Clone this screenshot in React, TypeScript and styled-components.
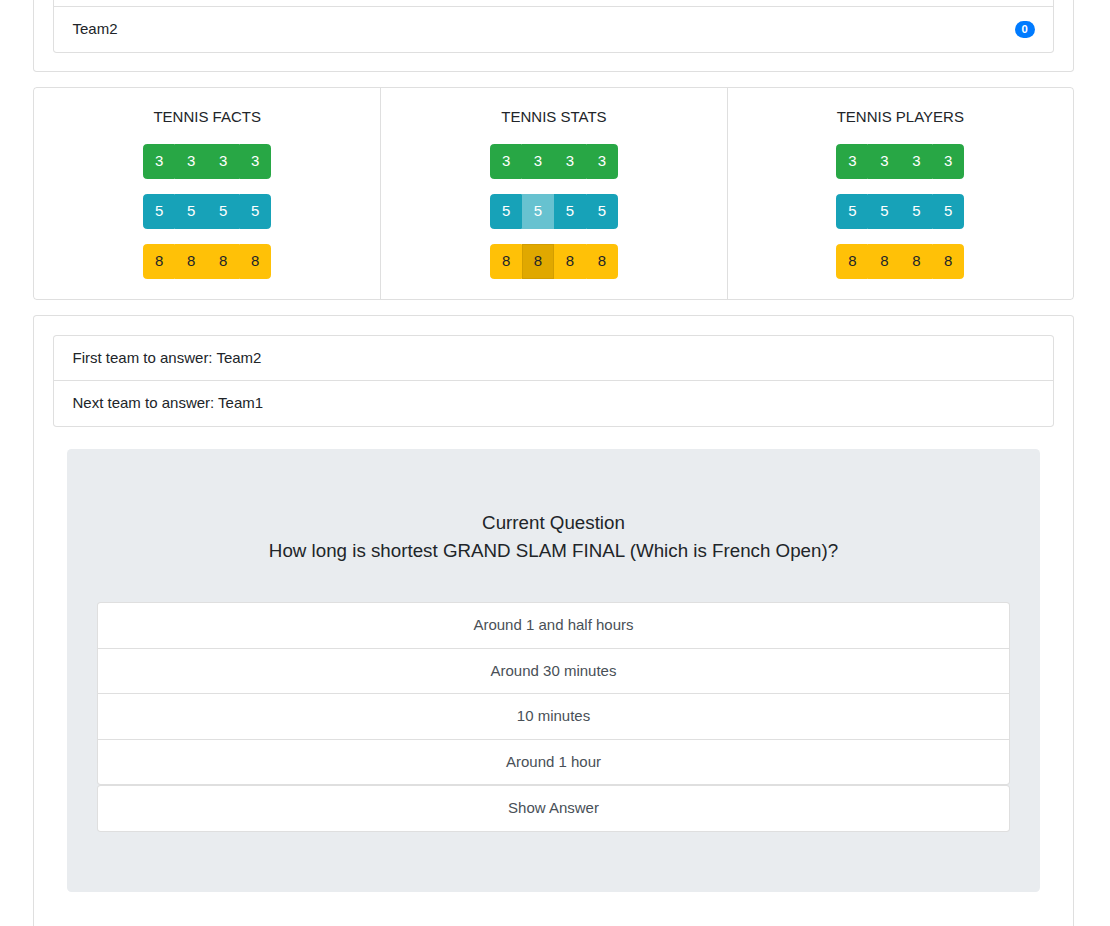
import styled, { createGlobalStyle, css } from "styled-components";

const GlobalStyle = createGlobalStyle`
  html, body {
    margin: 0;
    padding: 0;
    background: #fff;
  }
  body {
    font-family: "Liberation Sans", Arial, Helvetica, sans-serif;
    font-size: 15px;
    line-height: 1.5;
    color: #212529;
  }
  * {
    box-sizing: border-box;
  }
`;

const Page = styled.div`
  padding: 0 36px 0 33px;
  margin-top: -59px;
`;

const Card = styled.div`
  background: #fff;
  border: 1px solid rgba(0, 0, 0, 0.125);
  border-radius: 3.75px;
  margin-bottom: 15px;
`;

const CardBody = styled.div`
  padding: 18.75px 18.75px 18px;
`;

const ListGroup = styled.div`
  display: flex;
  flex-direction: column;
  border-radius: 3.75px;
`;

const ListItem = styled.div<{ $action?: boolean; $center?: boolean }>`
  display: flex;
  justify-content: ${(p) => (p.$center ? "center" : "space-between")};
  align-items: center;
  padding: 11px 18.75px;
  line-height: 22.5px;
  background: #fff;
  border: 1px solid rgba(0, 0, 0, 0.125);
  color: ${(p) => (p.$action ? "#495057" : "#212529")};
  cursor: ${(p) => (p.$action ? "pointer" : "default")};

  & + & {
    border-top-width: 0;
  }
  &:first-child {
    border-top-left-radius: 3.75px;
    border-top-right-radius: 3.75px;
  }
  &:last-child {
    border-bottom-left-radius: 3.75px;
    border-bottom-right-radius: 3.75px;
  }
`;

const Badge = styled.span`
  display: inline-block;
  background: #007bff;
  color: #fff;
  font-size: 11.25px;
  font-weight: 700;
  line-height: 1;
  padding: 2.8px 6.75px;
  border-radius: 10rem;
`;

const CardGroup = styled.div`
  display: grid;
  grid-template-columns: repeat(3, 1fr);
  border: 1px solid rgba(0, 0, 0, 0.125);
  border-radius: 3.75px;
  margin-bottom: 15px;
`;

const Category = styled.div`
  display: flex;
  flex-direction: column;
  align-items: center;
  gap: 15px;
  padding: 18.5px 18.75px 20px;
  & + & {
    border-left: 1px solid rgba(0, 0, 0, 0.125);
  }
`;

const CategoryTitle = styled.div`
  text-align: center;
  text-transform: uppercase;
  line-height: 22.5px;
`;

const palette = {
  success: { bg: "#28a745", fg: "#fff", activeBg: "#218838", activeBorder: "#1e7e34" },
  info: { bg: "#17a2b8", fg: "#fff", activeBg: "#138496", activeBorder: "#117a8b" },
  warning: { bg: "#ffc107", fg: "#212529", activeBg: "#e0a800", activeBorder: "#d39e00" },
};

type Variant = keyof typeof palette;

const BtnGroup = styled.div`
  display: inline-flex;
`;

const PointBtn = styled.button<{ $variant: Variant; $state?: "used" | "active" }>`
  font-family: inherit;
  font-size: 15px;
  line-height: 22px;
  padding: 5.5px 10.8px;
  margin: 0;
  border: 1px solid ${(p) => palette[p.$variant].bg};
  background: ${(p) => palette[p.$variant].bg};
  color: ${(p) => palette[p.$variant].fg};
  cursor: pointer;
  border-radius: 0;

  &:first-child {
    border-top-left-radius: 3.75px;
    border-bottom-left-radius: 3.75px;
  }
  &:last-child {
    border-top-right-radius: 3.75px;
    border-bottom-right-radius: 3.75px;
  }

  ${(p) =>
    p.$state === "used" &&
    css`
      opacity: 0.65;
    `}
  ${(p) =>
    p.$state === "active" &&
    css`
      background: ${palette[p.$variant].activeBg};
      border-color: ${palette[p.$variant].activeBorder};
    `}
`;

const Jumbotron = styled.div`
  background: #e9ecef;
  border-radius: 4.5px;
  margin: 22.5px 14px 30px 14px;
  padding: 60px 30px 60px;
`;

const Heading = styled.div`
  text-align: center;
  font-size: 18.75px;
  line-height: 28.2px;
  margin-bottom: 37px;
  color: #212529;
`;

const categories = ["Tennis Facts", "Tennis Stats", "Tennis Players"];
const rows: { variant: Variant; value: number }[] = [
  { variant: "success", value: 3 },
  { variant: "info", value: 5 },
  { variant: "warning", value: 8 },
];

const answers = ["Around 1 and half hours", "Around 30 minutes", "10 minutes", "Around 1 hour"];

export default function App() {
  const stateFor = (cat: number, row: number, i: number) => {
    if (cat !== 1 || i !== 1) return undefined;
    if (row === 1) return "used" as const;
    if (row === 2) return "active" as const;
    return undefined;
  };

  return (
    <>
      <GlobalStyle />
      <Page>
        <Card>
          <CardBody>
            <ListGroup>
              <ListItem>
                Team1 <Badge>0</Badge>
              </ListItem>
              <ListItem>
                Team2 <Badge>0</Badge>
              </ListItem>
            </ListGroup>
          </CardBody>
        </Card>

        <CardGroup>
          {categories.map((c, ci) => (
            <Category key={c}>
              <CategoryTitle>{c}</CategoryTitle>
              {rows.map((r, ri) => (
                <BtnGroup key={r.variant}>
                  {[0, 1, 2, 3].map((i) => (
                    <PointBtn key={i} $variant={r.variant} $state={stateFor(ci, ri, i)}>
                      {r.value}
                    </PointBtn>
                  ))}
                </BtnGroup>
              ))}
            </Category>
          ))}
        </CardGroup>

        <Card>
          <CardBody>
            <ListGroup>
              <ListItem>First team to answer: Team2</ListItem>
              <ListItem>Next team to answer: Team1</ListItem>
            </ListGroup>
            <Jumbotron>
              <Heading>
                Current Question
                <br />
                How long is shortest GRAND SLAM FINAL (Which is French Open)?
              </Heading>
              <ListGroup>
                {answers.map((a) => (
                  <ListItem key={a} $action $center>
                    {a}
                  </ListItem>
                ))}
              </ListGroup>
              <ListGroup>
                <ListItem $action $center>
                  Show Answer
                </ListItem>
              </ListGroup>
            </Jumbotron>
          </CardBody>
        </Card>
      </Page>
    </>
  );
}
